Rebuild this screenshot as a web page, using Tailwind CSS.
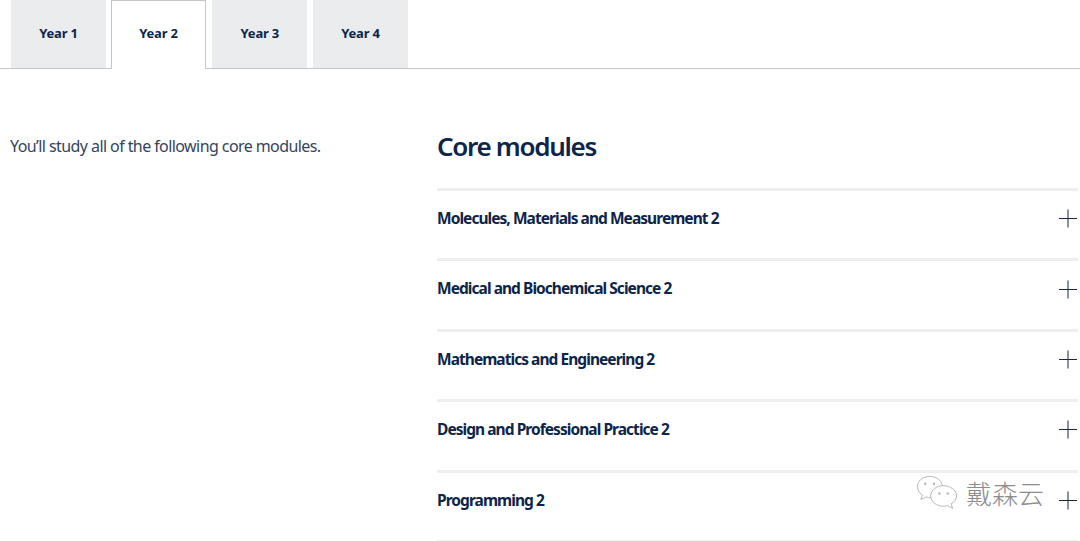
<!DOCTYPE html>
<html lang="en">
<head>
    <meta charset="UTF-8">
    <title>Modules</title>
    <script src="https://cdn.jsdelivr.net/npm/@tailwindcss/browser@4"></script>
</head>
<body class="bg-white font-['Noto_Sans','Open_Sans',sans-serif] text-[#0d2549]">
    <div class="relative w-[1080px] h-[541px] overflow-hidden">
        <!-- tabs -->
        <div class="flex items-end gap-[5.67px] h-[69px] pl-[11px] border-b border-[#c4c7c9]">
            <div class="w-[95px] h-[68px] flex items-center justify-center bg-[#eaecee] text-[13px] font-bold tracking-[-0.2px]">Year 1</div>
            <div class="w-[95px] h-[69px] -mb-px -ml-[0.67px] mr-[0.67px] pb-[2px] flex items-center justify-center bg-white border border-b-0 border-[#c4c7c9] text-[13px] font-bold tracking-[-0.2px]">Year 2</div>
            <div class="w-[95px] h-[68px] flex items-center justify-center bg-[#eaecee] text-[13px] font-bold tracking-[-0.2px]">Year 3</div>
            <div class="w-[95px] h-[68px] flex items-center justify-center bg-[#eaecee] text-[13px] font-bold tracking-[-0.2px]">Year 4</div>
        </div>

        <div class="flex pl-[10px] pr-[2px]">
            <p class="w-[427px] pt-[65px] text-[16px] leading-[24px] tracking-[-0.58px] text-[#33445f]">You’ll study all of the following core modules.</p>

            <div class="flex-1 pt-[58px]">
                <h2 class="h-[61px] text-[26px] leading-[38px] font-semibold tracking-[-1.3px]">Core modules</h2>
                <div class="border-t-[3px] border-[#eeeeee] h-[70.4px] pb-[12px] flex items-center justify-between font-bold text-[15.5px] tracking-[-0.95px]">
                    <span>Molecules, Materials and Measurement 2</span>
                    <svg class="w-[19px] h-[19px]" viewBox="0 0 19 19" fill="none" stroke="#16263f" stroke-width="1"><path d="M0 9.5H18M9 0.500V18.500"/></svg>
                </div>
                <div class="border-t-[3px] border-[#eeeeee] h-[70.4px] pb-[12px] flex items-center justify-between font-bold text-[15.5px] tracking-[-0.95px]">
                    <span>Medical and Biochemical Science 2</span>
                    <svg class="w-[19px] h-[19px]" viewBox="0 0 19 19" fill="none" stroke="#16263f" stroke-width="1"><path d="M0 9.5H18M9 0.500V18.500"/></svg>
                </div>
                <div class="border-t-[3px] border-[#eeeeee] h-[70.4px] pb-[12px] flex items-center justify-between font-bold text-[15.5px] tracking-[-0.95px]">
                    <span>Mathematics and Engineering 2</span>
                    <svg class="w-[19px] h-[19px]" viewBox="0 0 19 19" fill="none" stroke="#16263f" stroke-width="1"><path d="M0 9.5H18M9 0.500V18.500"/></svg>
                </div>
                <div class="border-t-[3px] border-[#eeeeee] h-[70.4px] pb-[12px] flex items-center justify-between font-bold text-[15.5px] tracking-[-0.95px]">
                    <span>Design and Professional Practice 2</span>
                    <svg class="w-[19px] h-[19px]" viewBox="0 0 19 19" fill="none" stroke="#16263f" stroke-width="1"><path d="M0 9.5H18M9 0.500V18.500"/></svg>
                </div>
                <div class="border-t-[3px] border-[#eeeeee] h-[70.4px] pb-[12px] flex items-center justify-between font-bold text-[15.5px] tracking-[-0.95px]">
                    <span>Programming 2</span>
                    <svg class="w-[19px] h-[19px]" viewBox="0 0 19 19" fill="none" stroke="#16263f" stroke-width="1"><path d="M0 9.5H18M9 0.500V18.500"/></svg>
                </div>
                <div class="border-t-[3px] border-[#eeeeee]"></div>
            </div>
        </div>

        <!-- watermark -->
        <div class="absolute left-[916px] top-[474px] flex items-center gap-[7px] font-['Noto_Sans_CJK_SC',sans-serif] text-[26px] leading-[38px] font-light text-[#8c8c8c]">
            <svg class="w-[43px] h-[38px]" viewBox="0 0 44 38" fill="#fff" stroke="#b5b5b5" stroke-width="1">
                <path d="M14 2C7 2 1.500 6.500 1.500 12.500C1.500 16 3.500 19 6.500 21L5 25.500L10.500 23C12 23.500 13.500 23.700 15 23.700C21 23.700 27 19 27 12.500C27 6.500 21 2 14 2Z"/>
                <path d="M28 11.500C21 11.500 15 16 15 22C15 28 21 32.500 28 32.500C29.500 32.500 31 32.300 32.500 31.800L37.500 35L36 30C39.500 28 41.500 25.300 41.500 22C41.500 16 35 11.500 28 11.500Z"/>
                <circle cx="9.500" cy="9.500" r="1.200" fill="#b5b5b5" stroke="none"/>
                <circle cx="18.500" cy="9.500" r="1.200" fill="#b5b5b5" stroke="none"/>
                <circle cx="24" cy="19.500" r="1.200" fill="#b5b5b5" stroke="none"/>
                <circle cx="32.500" cy="19.500" r="1.200" fill="#b5b5b5" stroke="none"/>
            </svg>
            <span>戴森云</span>
        </div>
    </div>
</body>
</html>
